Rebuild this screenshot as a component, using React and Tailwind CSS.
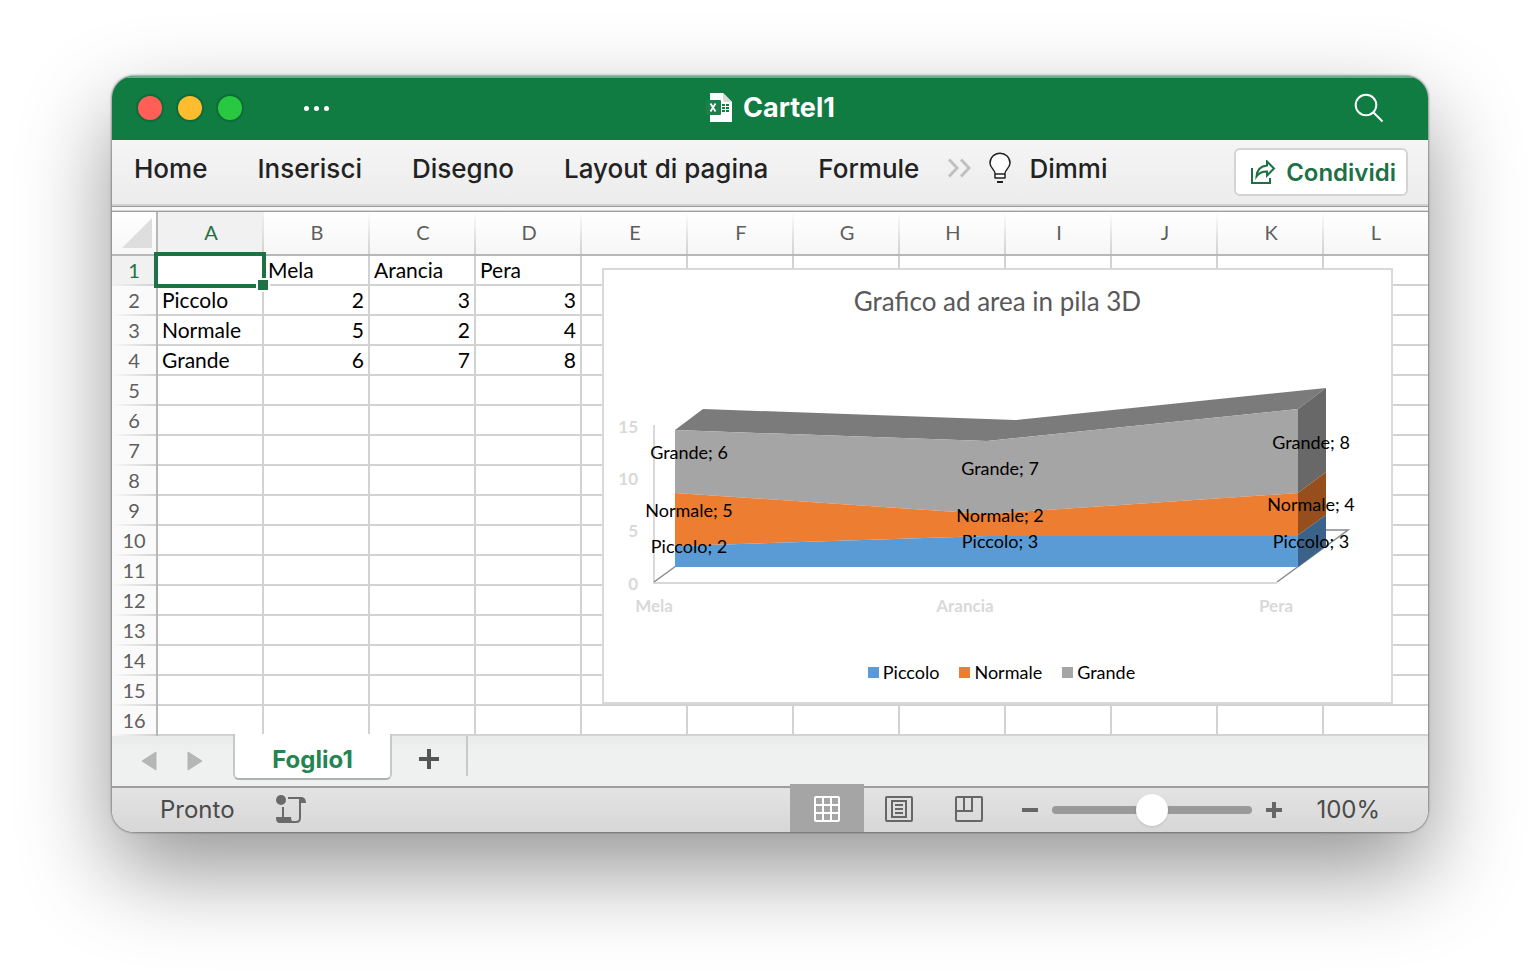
import { useState } from "react";

const COLUMNS = ["A", "B", "C", "D", "E", "F", "G", "H", "I", "J", "K", "L"];
const ROWS = 16;

const CELLS = {
  B1: "Mela",
  C1: "Arancia",
  D1: "Pera",
  A2: "Piccolo",
  B2: 2,
  C2: 3,
  D2: 3,
  A3: "Normale",
  B3: 5,
  C3: 2,
  D3: 4,
  A4: "Grande",
  B4: 6,
  C4: 7,
  D4: 8,
};

const MENU = ["Home", "Inserisci", "Disegno", "Layout di pagina", "Formule"];

const LABELS = [
  { x: 85, y: 189, text: "Grande; 6" },
  { x: 85, y: 247, text: "Normale; 5" },
  { x: 85, y: 283, text: "Piccolo; 2" },
  { x: 396, y: 205, text: "Grande; 7" },
  { x: 396, y: 252, text: "Normale; 2" },
  { x: 396, y: 278, text: "Piccolo; 3" },
  { x: 707, y: 179, text: "Grande; 8" },
  { x: 707, y: 241, text: "Normale; 4" },
  { x: 707, y: 278, text: "Piccolo; 3" },
];

const LEGEND = [
  { name: "Piccolo", color: "bg-[#5b9bd5]" },
  { name: "Normale", color: "bg-[#ed7d31]" },
  { name: "Grande", color: "bg-[#a5a5a5]" },
];

/* ICONS */
const WorkbookIcon = () => (
  <svg width="28" height="32" viewBox="0 0 28 32" aria-hidden="true">
    <path d="M5 1h13l9 9v20H5z" fill="#fff" />
    <path d="M18 1v7a2 2 0 0 0 2 2h7z" fill="#d5dcd8" />
    <g fill="#107c41">
      <rect x="17" y="12" width="3" height="2" />
      <rect x="21" y="12" width="3" height="2" />
      <rect x="17" y="15" width="3" height="2" />
      <rect x="21" y="15" width="3" height="2" />
      <rect x="17" y="18" width="3" height="2" />
      <rect x="21" y="18" width="3" height="2" />
    </g>
    <rect x="1" y="8" width="15" height="15" rx="1" fill="#1d7f4a" />
    <path d="M5.500 11.500l5 8M10.500 11.500l-5 8" stroke="#fff" strokeWidth="1.800" />
  </svg>
);

const SearchIcon = () => (
  <svg width="30" height="30" viewBox="0 0 30 30" fill="none" stroke="#fff" strokeWidth="2" aria-hidden="true">
    <circle cx="12" cy="12" r="10.300" />
    <path d="M19.300 19.300L28.500 28.500" />
  </svg>
);

const BulbIcon = () => (
  <svg width="22" height="32" viewBox="0 0 22 32" fill="none" stroke="#222" strokeWidth="1.500" aria-hidden="true">
    <path
      d="M6 26v-4.500C6 17.500 1 16 1 11a10 9.800 0 0 1 20 0c0 5-5 6.500-5 10.500V26z"
      fill="#fff"
      strokeLinejoin="round"
    />
    <path d="M6 22h10" />
    <path d="M8 30h6" strokeWidth="2" />
  </svg>
);

const ShareIcon = () => (
  <svg width="26" height="26" viewBox="0 0 26 26" fill="none" stroke="#1e7145" strokeWidth="2" aria-hidden="true">
    <path d="M2 8v15h18v-5" />
    <path d="M17 1.500l7 7-7 7v-4c-5-.2-8 1.500-10.500 5C7 9.500 11 6 17 5.500z" strokeLinejoin="miter" />
  </svg>
);

const MacroIcon = () => (
  <svg width="32" height="30" viewBox="0 0 32 30" fill="none" stroke="#6a6a6a" strokeWidth="2" aria-hidden="true">
    <circle cx="6" cy="5" r="5" fill="#6a6a6a" stroke="none" />
    <path d="M13 3h13" />
    <path d="M24 8V4.500A2.500 2.500 0 0 1 26 2c3 0 5 2 5 6z" fill="#6a6a6a" stroke="none" />
    <path d="M25 4v19c0 3-1 4-4 4h-4" />
    <path d="M8 12v11" />
    <path d="M1 22h15c0 3 1 4.500 3 5l2 1H5c-3 0-4-2-4-6z" fill="#6a6a6a" stroke="none" />
  </svg>
);

const NormalViewIcon = () => (
  <svg width="26" height="28" viewBox="0 0 26 28" fill="none" stroke="#fff" strokeWidth="2" aria-hidden="true">
    <rect x="1" y="1" width="24" height="24" rx="1" />
    <path d="M1 9h24M1 17h24M9 1v24M17 1v24" />
  </svg>
);

const PageViewIcon = () => (
  <svg width="28" height="28" viewBox="0 0 28 28" fill="none" stroke="#666" strokeWidth="2" aria-hidden="true">
    <rect x="1" y="1" width="26" height="24" rx="1" />
    <rect x="7" y="5" width="14" height="16" />
    <path d="M10 9h8M10 13h8M10 17h8" />
  </svg>
);

const BreakViewIcon = () => (
  <svg width="28" height="28" viewBox="0 0 28 28" fill="none" stroke="#666" strokeWidth="2" aria-hidden="true">
    <rect x="1" y="1" width="26" height="24" rx="1" />
    <path d="M1 15h16V1M9 1v14" />
  </svg>
);

/* CHART */
const AreaChart = () => (
  <figure className="absolute left-[490px] top-14 w-[791px] border-2 border-[#d9d9d9] bg-white pb-4 font-[Lato,sans-serif]">
    <figcaption className="pt-[15px] pb-px text-center text-[26px] leading-8 text-[#595959]">
      Grafico ad area in pila 3D
    </figcaption>
    <svg viewBox="0 48 787 340" className="block w-full" role="img" aria-label="Grafico ad area in pila 3D">
      <path d="M50 155V313H673" fill="none" stroke="#d9d9d9" strokeWidth="2" />
      <path d="M50 312L72 296M673 312L744 260H722" fill="none" stroke="#888" strokeWidth="1.500" />

      {/* top and side faces */}
      <path d="M71 160L99 139L411 150L722 118L694 139L383 171z" fill="#7b7b7b" />
      <path d="M694 139L722 118V202L694 223z" fill="#686868" />
      <path d="M694 223L722 202V245L694 265z" fill="#964f1c" />
      <path d="M694 265L722 245V276L694 297z" fill="#3b638a" />

      {/* front faces */}
      <path d="M71 160L383 171L694 139V223L383 244L71 223z" fill="#a5a5a5" />
      <path d="M71 223L383 244L694 223V266H383L71 276z" fill="#ed7d31" />
      <path d="M71 276L383 266H694V297H71z" fill="#5b9bd5" />

      <g fill="#d9d9d9" fontSize="17" fontWeight="700">
        <g textAnchor="end">
          <text x="34" y="163">15</text>
          <text x="34" y="215">10</text>
          <text x="34" y="267">5</text>
          <text x="34" y="320">0</text>
        </g>
        <g textAnchor="middle">
          <text x="50" y="342">Mela</text>
          <text x="361" y="342">Arancia</text>
          <text x="672" y="342">Pera</text>
        </g>
      </g>
      <g fill="#000" fontSize="18" textAnchor="middle">
        {LABELS.map((l) => (
          <text key={`${l.x}-${l.y}`} x={l.x} y={l.y}>
            {l.text}
          </text>
        ))}
      </g>
    </svg>
    <ul className="flex justify-center gap-5 pl-2">
      {LEGEND.map((item) => (
        <li key={item.name} className="flex items-center gap-1 text-lg leading-7">
          <span className={`size-[11px] ${item.color}`} />
          {item.name}
        </li>
      ))}
    </ul>
  </figure>
);

/* SHEET */
const Sheet = () => (
  <div className="relative overflow-hidden bg-white">
    <table className="w-full table-fixed border-separate border-spacing-0 font-[Lato,sans-serif] text-[21px] leading-7">
      <colgroup>
        <col className="w-[46px]" />
        {COLUMNS.map((c) => (
          <col key={c} className={c === "L" ? "" : "w-[106px]"} />
        ))}
      </colgroup>
      <thead>
        <tr className="h-11 bg-linear-to-b from-white to-[#f6f6f6] text-xl">
          <th className="border-r-2 border-b-2 border-[#b7b7b7] p-0">
            <svg width="30" height="30" viewBox="0 0 30 30" className="mr-1 ml-auto" aria-hidden="true">
              <path d="M30 0v30H0z" fill="#dedede" />
            </svg>
          </th>
          {COLUMNS.map((c) => (
            <th
              key={c}
              scope="col"
              className={`border-b-2 border-[#b7b7b7] bg-[length:2px_100%] bg-right bg-no-repeat px-0 pt-0 pb-0.5 font-normal ${
                c === "L" ? "" : "bg-[linear-gradient(to_bottom,transparent,#d2d2d2)]"
              } ${c === "A" ? "bg-[#f1f1f1] text-[#1e7145]" : "text-[#5e5e5e]"}`}
            >
              {c}
            </th>
          ))}
        </tr>
      </thead>
      <tbody>
        {Array.from({ length: ROWS }, (_, i) => i + 1).map((r) => (
          <tr key={r} className="h-[30px]">
            <th
              scope="row"
              className={`border-r-2 border-[#b7b7b7] bg-[linear-gradient(to_right,transparent,#d2d2d2)] bg-[length:100%_2px] bg-bottom bg-no-repeat px-0 pt-0 pb-0.5 text-xl leading-7 font-normal ${
                r === 1 ? "bg-[#f1f1f1] text-[#1e7145]" : "bg-[#fafafa] text-[#5e5e5e]"
              }`}
            >
              {r}
            </th>
            {COLUMNS.map((c) => {
              const value = CELLS[c + r];

              return (
                <td
                  key={c}
                  className={`border-b-2 border-[#d2d2d2] px-1 py-0 leading-7 ${c === "L" ? "" : "border-r-2"} ${
                    typeof value === "number" ? "text-right" : "text-left"
                  }`}
                >
                  {value}
                </td>
              );
            })}
          </tr>
        ))}
      </tbody>
    </table>

    {/* active cell A1 */}
    <div className="absolute top-10 left-[42px] h-9 w-28 border-4 border-[#1e7145]">
      <span className="absolute -right-[8px] -bottom-[8px] size-[14px] border-2 border-white bg-[#1e7145]" />
    </div>

    <AreaChart />
  </div>
);

export default function App() {
  const [zoom, setZoom] = useState(100);

  return (
    <div className="min-h-screen bg-white px-28 pt-19 pb-37 font-[Inter,sans-serif]">
      <div className="overflow-hidden rounded-[22px] shadow-[0_0_2px_1px_rgba(0,0,0,0.35),0_38px_90px_0_rgba(0,0,0,0.42)]">

        {/* TITLE BAR */}
        <header className="grid h-16 grid-cols-[1fr_auto_1fr] items-center border-t-2 border-[#6bad89] bg-[#107c41] px-6 pb-0.5 text-white">
          <div className="flex items-center gap-3">
            <button aria-label="Chiudi" className="size-7 rounded-full border-2 border-[#0f6c39] bg-[#ff5f57]" />
            <button aria-label="Riduci" className="size-7 rounded-full border-2 border-[#0f6c39] bg-[#febc2e]" />
            <button aria-label="Ingrandisci" className="size-7 rounded-full border-2 border-[#0f6c39] bg-[#28c840]" />
            <button aria-label="Altro" className="ml-12 flex gap-[5px]">
              <span className="size-[5px] rounded-full bg-white" />
              <span className="size-[5px] rounded-full bg-white" />
              <span className="size-[5px] rounded-full bg-white" />
            </button>
          </div>
          <h1 className="flex items-center gap-[10px] text-[27px] font-bold">
            <WorkbookIcon />
            Cartel1
          </h1>
          <button aria-label="Cerca" className="mr-5 justify-self-end">
            <SearchIcon />
          </button>
        </header>

        {/* RIBBON */}
        <nav className="flex h-16 items-start bg-linear-to-b from-[#f5f5f5] to-[#ececec] pr-5 pl-[22px] text-[26px] font-medium text-[#222]">
          <div className="flex h-14 items-center gap-[50px]">
            {MENU.map((m) => (
              <button key={m}>{m}</button>
            ))}
          </div>
          <button aria-label="Altre schede" className="ml-7 flex h-14 items-center">
            <svg width="24" height="20" viewBox="0 0 24 20" fill="none" stroke="#c0c0c0" strokeWidth="3" aria-hidden="true">
              <path d="M2 1.500l8 8.500-8 8.500M14 1.500l8 8.500-8 8.500" />
            </svg>
          </button>
          <button className="ml-[18px] flex h-14 items-center gap-[18px]">
            <BulbIcon />
            Dimmi
          </button>
          <button className="mt-2 ml-auto flex h-12 items-center gap-[10px] rounded-md border-2 border-[#d4d4d4] bg-white pt-0.5 pr-[10px] pl-[14px] text-2xl font-semibold text-[#1e7145]">
            <ShareIcon />
            Condividi
          </button>
        </nav>
        <div className="h-2 border-t-2 border-b border-t-[#d0d0ce] border-b-[#9d9d9d]">
          <div className="h-[5px] border-t border-b border-t-[#9a9a98] border-b-[#d8d8d8] bg-[#f8f8f8]" />
        </div>

        <Sheet />

        {/* SHEET TABS */}
        <div className="flex h-[50px] items-start bg-linear-to-b from-[#e9eaea] to-[#eff0f0] to-30%">
          <div className="flex items-start gap-[30px] pl-[29px]">
            <button aria-label="Foglio precedente" className="flex h-[50px] items-center">
              <svg width="16" height="20" viewBox="0 0 16 20" aria-hidden="true">
                <path d="M15 1v18L1 10z" fill="#b5b5b5" stroke="#b5b5b5" strokeLinejoin="round" />
              </svg>
            </button>
            <button aria-label="Foglio successivo" className="flex h-[50px] items-center">
              <svg width="16" height="20" viewBox="0 0 16 20" aria-hidden="true">
                <path d="M1 1v18L15 10z" fill="#b5b5b5" stroke="#b5b5b5" strokeLinejoin="round" />
              </svg>
            </button>
            <button className="relative -mt-0.5 h-[46px] w-[159px] rounded-b-md border-x-2 border-b-2 border-x-[#c8c8c8] border-b-[#b0b0b0] bg-white pt-2 text-2xl font-bold text-[#248552]">
              Foglio1
            </button>
          </div>
          <button aria-label="Nuovo foglio" className="flex h-10 w-19 items-center justify-center border-r-2 border-[#c8c8c8] pt-1.5">
            <svg width="20" height="20" viewBox="0 0 20 20" fill="none" stroke="#555" strokeWidth="4" aria-hidden="true">
              <path d="M10 0v20M0 10h20" />
            </svg>
          </button>
        </div>

        {/* STATUS BAR */}
        <footer className="flex h-[46px] items-center gap-10 border-t-2 border-[#9d9d9d] bg-linear-to-b from-[#e3e3e3] to-[#d7d7d7] px-12 text-2xl text-[#4a4a4a]">
          <span>Pronto</span>
          <button aria-label="Registra macro">
            <MacroIcon />
          </button>
          <div className="ml-auto flex items-center">
            <button aria-label="Normale" className="-mt-1 flex h-12 w-[74px] items-center justify-center bg-[#a5a5a5] pt-1">
              <NormalViewIcon />
            </button>
            <button aria-label="Layout di pagina" className="flex w-[70px] justify-center">
              <PageViewIcon />
            </button>
            <button aria-label="Anteprima interruzioni di pagina" className="flex w-[70px] justify-center">
              <BreakViewIcon />
            </button>
            <button aria-label="Riduci zoom" className="ml-[18px]" onClick={() => setZoom(Math.max(0, zoom - 10))}>
              <svg width="16" height="16" viewBox="0 0 16 16" fill="none" stroke="#666" strokeWidth="4" aria-hidden="true">
                <path d="M0 8h16" />
              </svg>
            </button>
            <input
              type="range"
              aria-label="Zoom"
              min="0"
              max="200"
              value={zoom}
              onChange={(e) => setZoom(Number(e.target.value))}
              className="mx-[14px] h-8 w-[200px] appearance-none bg-transparent [&::-webkit-slider-runnable-track]:h-2 [&::-webkit-slider-runnable-track]:rounded-full [&::-webkit-slider-runnable-track]:bg-[#9a9a9a] [&::-webkit-slider-thumb]:-mt-3 [&::-webkit-slider-thumb]:size-8 [&::-webkit-slider-thumb]:appearance-none [&::-webkit-slider-thumb]:rounded-full [&::-webkit-slider-thumb]:bg-white [&::-webkit-slider-thumb]:shadow"
            />
            <button aria-label="Aumenta zoom" onClick={() => setZoom(Math.min(200, zoom + 10))}>
              <svg width="16" height="16" viewBox="0 0 16 16" fill="none" stroke="#666" strokeWidth="4" aria-hidden="true">
                <path d="M0 8h16M8 0v16" />
              </svg>
            </button>
            <span className="ml-[34px]">{zoom}%</span>
          </div>
        </footer>
      </div>
    </div>
  );
}
